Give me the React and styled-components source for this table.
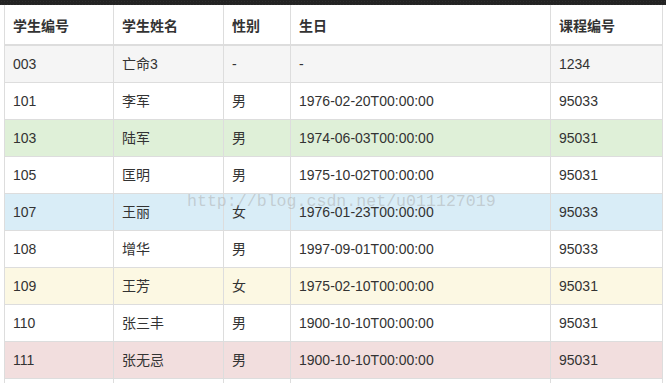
import React from "react";
import styled, { createGlobalStyle } from "styled-components";

const Global = createGlobalStyle`
  html, body { margin: 0; padding: 0; background: #fff; }
  body { font-family: "Liberation Sans", Arial, "Noto Sans CJK SC", sans-serif; color: #333; overflow: hidden; }
`;

const TopBar = styled.div`
  height: 5px;
  background: #232323;
  background-image: radial-gradient(#2e2e2e 0.6px, transparent 0.8px);
  background-size: 3px 3px;
`;

const Page = styled.div`
  position: relative;
  padding-left: 4px;
`;

const Table = styled.table`
  width: 658px;
  table-layout: fixed;
  border-collapse: collapse;
  border-spacing: 0;
  font-size: 14px;
  line-height: 20px;
`;

const ROW_BG = {
  active: "#f5f5f5",
  success: "#dff0d8",
  info: "#d9edf7",
  warning: "#fcf8e3",
  danger: "#f2dede",
  plain: "#fff",
};

const Row = styled.tr`
  background: ${(p) => ROW_BG[p.$tone || "plain"]};
`;

const Th = styled.th`
  text-align: left;
  font-weight: bold;
  padding: 10px 8px 8px;
  border: 1px solid #ddd;
  border-top: none;
  border-bottom: 2px solid #ddd;
  color: #333;
  height: 21px;
`;

const Td = styled.td`
  padding: 8px;
  border: 1px solid #ddd;
  white-space: nowrap;
  height: 20px;
`;

const Watermark = styled.div`
  position: absolute;
  left: 187px;
  top: 187px;
  font-family: "Liberation Mono", "Courier New", monospace;
  font-size: 16.6px;
  line-height: 20px;
  color: rgba(165, 165, 165, 0.45);
  pointer-events: none;
  white-space: nowrap;
`;

const rows = [
  { tone: "active", id: "003", name: "亡命3", sex: "-", birth: "-", course: "1234" },
  { tone: "plain", id: "101", name: "李军", sex: "男", birth: "1976-02-20T00:00:00", course: "95033" },
  { tone: "success", id: "103", name: "陆军", sex: "男", birth: "1974-06-03T00:00:00", course: "95031" },
  { tone: "plain", id: "105", name: "匡明", sex: "男", birth: "1975-10-02T00:00:00", course: "95031" },
  { tone: "info", id: "107", name: "王丽", sex: "女", birth: "1976-01-23T00:00:00", course: "95033" },
  { tone: "plain", id: "108", name: "增华", sex: "男", birth: "1997-09-01T00:00:00", course: "95033" },
  { tone: "warning", id: "109", name: "王芳", sex: "女", birth: "1975-02-10T00:00:00", course: "95031" },
  { tone: "plain", id: "110", name: "张三丰", sex: "男", birth: "1900-10-10T00:00:00", course: "95031" },
  { tone: "danger", id: "111", name: "张无忌", sex: "男", birth: "1900-10-10T00:00:00", course: "95031" },
  { tone: "plain", id: "", name: "", sex: "", birth: "", course: "" },
];

export default function App() {
  return (
    <>
      <Global />
      <TopBar />
      <Page>
        <Table>
          <colgroup>
            <col style={{ width: 109 }} />
            <col style={{ width: 110 }} />
            <col style={{ width: 67 }} />
            <col style={{ width: 260 }} />
            <col style={{ width: 112 }} />
          </colgroup>
          <thead>
            <Row>
              <Th>学生编号</Th>
              <Th>学生姓名</Th>
              <Th>性别</Th>
              <Th>生日</Th>
              <Th>课程编号</Th>
            </Row>
          </thead>
          <tbody>
            {rows.map((r, i) => (
              <Row key={i} $tone={r.tone}>
                <Td>{r.id}</Td>
                <Td>{r.name}</Td>
                <Td>{r.sex}</Td>
                <Td>{r.birth}</Td>
                <Td>{r.course}</Td>
              </Row>
            ))}
          </tbody>
        </Table>
        <Watermark>http://blog.csdn.net/u011127019</Watermark>
      </Page>
    </>
  );
}
